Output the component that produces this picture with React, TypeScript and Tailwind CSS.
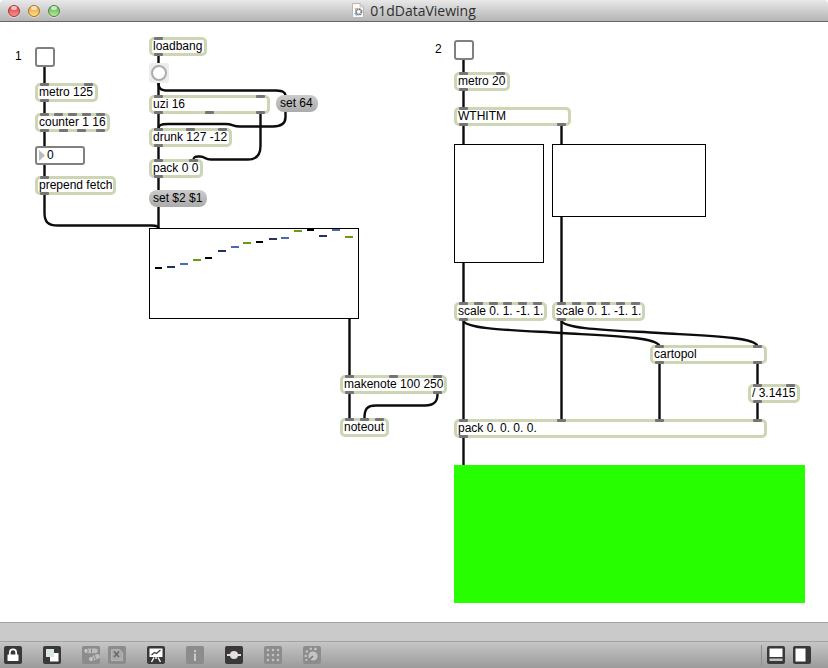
import type { ReactNode } from "react";

type Box = { text: string; place: string; inlets: number; outlets: number };

const boxes: Box[] = [
  { text: "metro 125", place: "left-[35px] top-[61px] w-[63px]", inlets: 2, outlets: 1 },
  { text: "counter 1 16", place: "left-[35px] top-[91px] w-[75px]", inlets: 5, outlets: 4 },
  { text: "prepend fetch", place: "left-[35px] top-[154px] w-[81px]", inlets: 1, outlets: 1 },
  { text: "loadbang", place: "left-[149px] top-[15px] w-[58px]", inlets: 1, outlets: 1 },
  { text: "uzi 16", place: "left-[149px] top-[73px] w-[121px]", inlets: 2, outlets: 3 },
  { text: "drunk 127 -12", place: "left-[149px] top-[106px] w-[83px]", inlets: 3, outlets: 1 },
  { text: "pack 0 0", place: "left-[149px] top-[137px] w-[54px]", inlets: 2, outlets: 1 },
  { text: "makenote 100 250", place: "left-[340px] top-[353px] w-[107px]", inlets: 3, outlets: 2 },
  { text: "noteout", place: "left-[340px] top-[396px] w-[49px]", inlets: 3, outlets: 0 },
  { text: "metro 20", place: "left-[454px] top-[50px] w-[56px]", inlets: 2, outlets: 1 },
  { text: "WTHITM", place: "left-[454px] top-[85px] w-[117px]", inlets: 1, outlets: 2 },
  { text: "scale 0. 1. -1. 1.", place: "left-[454px] top-[280px] w-[93px]", inlets: 6, outlets: 1 },
  { text: "scale 0. 1. -1. 1.", place: "left-[552px] top-[280px] w-[93px]", inlets: 6, outlets: 1 },
  { text: "cartopol", place: "left-[650px] top-[323px] w-[117px]", inlets: 2, outlets: 2 },
  { text: "/ 3.1415", place: "left-[748px] top-[362px] w-[52px]", inlets: 2, outlets: 1 },
  { text: "pack 0. 0. 0. 0.", place: "left-[454px] top-[397px] w-[313px]", inlets: 4, outlets: 1 },
];

// Patch cords, in window coordinates (the canvas starts below the 22px title bar).
const cords = [
  "M44.5 67V83M44.5 102V113M44.5 132V146M44.5 165V176",
  "M44.5 195V213C44.5 222 48 225.5 58 225.5H152C156 225.5 158 226 158.5 228",
  "M158.5 56V63M158.5 83V95M158.5 114V128M158.5 147V159M158.5 178V190M158.5 207V228",
  "M158.5 83C158.5 89 161 90.5 168 90.5H276C283 91 285.5 92 285.5 96",
  "M285.5 111V117C285.5 124 281 126.5 273 126.5H240C232 126.5 234 124 225 124H168C161 124 158.5 125 158.5 129",
  "M260.5 114V146C260.5 156 255 159.5 248 159.5H211C204 159.5 206 156.5 200 156.5H198C194 156.5 193.5 158 193.5 160",
  "M349.5 319V375M349.5 394V418",
  "M437.5 394C437.5 402 434 405.5 425 405.5H376C367 405.5 364.5 409 364.5 418",
  "M463.5 60V72M463.5 91V107M463.5 126V144M463.5 263V302M463.5 321V419M463.5 438V465",
  "M561.5 126V144M561.5 217V302M561.5 321V419",
  "M463.5 321C467 329 510 330 561.5 333S656 337 659.5 346",
  "M561.5 321C565 329 608 330 659.5 333S754 337 757.5 346",
  "M659.5 364V419M757.5 364V384M757.5 403V419",
];

const sliderTints = ["#000000", "#22335c", "#4969b4", "#6b9b12"];
const sliderSteps = [
  [5, 38], [17, 37], [30, 34], [43, 30], [55, 28], [68, 21], [81, 17], [93, 13],
  [106, 12], [119, 9], [131, 8], [144, 1], [157, 0], [169, 6], [182, 0], [195, 7],
];

function Ports({ count, edge }: { count: number; edge: string }) {
  return (
    <div className={`absolute left-[2px] right-[2px] flex justify-between ${edge}`}>
      {Array.from({ length: count }, (_, i) => (
        <span key={i} className="h-[3px] w-[9px] rounded-[1px] bg-[#757575]" />
      ))}
    </div>
  );
}

function ObjectBox({ text, place, inlets, outlets }: Box) {
  return (
    <div
      className={`absolute h-[19px] whitespace-nowrap rounded-[5px] border-[3px] border-[#cdd6b4] bg-white pl-px leading-3 ${place}`}
    >
      <Ports count={inlets} edge="-top-[3px]" />
      {text}
      <Ports count={outlets} edge="-bottom-[3px]" />
    </div>
  );
}

function Message({ text, place }: { text: string; place: string }) {
  return (
    <button
      type="button"
      className={`absolute h-[17px] whitespace-nowrap rounded-lg bg-linear-to-b from-[#cbcbcb] to-[#ababab] pl-1 text-left leading-[17px] ${place}`}
    >
      {text}
    </button>
  );
}

function Tool({ label, tone = "bg-[#393939]", children }: { label: string; tone?: string; children: ReactNode }) {
  return (
    <button type="button" aria-label={label} className={`size-[18px] rounded-[2px] ${tone}`}>
      <svg viewBox="0 0 18 18" className="size-[18px]">{children}</svg>
    </button>
  );
}

function Light({ tone }: { tone: string }) {
  return (
    <span className={`flex size-3 justify-center rounded-full border shadow-[0_1px_0_#ffffff80] ${tone}`}>
      <span className="h-1 w-[6px] rounded-full bg-white/65" />
    </span>
  );
}

const dim = "bg-[#8c8c8c]";

export default function App() {
  return (
    <div className="flex min-h-screen flex-col bg-white font-['Liberation_Sans',Arial,sans-serif] text-[12px] text-black">
      <header className="relative flex h-[22px] items-center justify-center gap-[6px] rounded-t-[4px] border-b border-[#666] bg-linear-to-b from-[#e9e9e9] to-[#b5b5b5]">
        <div className="absolute left-2 top-[5px] flex gap-2">
          <Light tone="border-[#9a3b3b] bg-linear-to-b from-[#d8323a] to-[#ff8f90]" />
          <Light tone="border-[#a8702b] bg-linear-to-b from-[#e79a35] to-[#ffdf80]" />
          <Light tone="border-[#4c8043] bg-linear-to-b from-[#55ad4b] to-[#b3ee94]" />
        </div>
        <svg viewBox="0 0 12 15" className="h-[15px] w-3">
          <path d="M.5 .5H8L11.5 4V14.5H.5Z" fill="#fafafa" stroke="#b8b8b8" />
          <path d="M8 .5V4H11.5Z" fill="#ddd" stroke="#b8b8b8" strokeWidth=".6" />
          <circle cx="6.8" cy="8.8" r="2.7" fill="none" stroke="#777" strokeWidth="1.8" strokeDasharray="1.6 .5" />
          <path d="M3 6.5L5 5.3" stroke="#eda552" strokeWidth="1.5" />
          <path d="M2.6 10L5 12.3" stroke="#6bbbe0" strokeWidth="1.6" />
          <circle cx="6.8" cy="8.8" r="1" fill="#fff" />
        </svg>
        <h1 className="font-['Open_Sans','Noto_Sans',sans-serif] text-[14px] leading-5 text-[#303030]">
          01dDataViewing
        </h1>
      </header>

      <main className="relative min-h-[600px] flex-1 overflow-hidden">
        <svg viewBox="0 22 828 600" className="absolute left-0 top-0 h-[600px] w-[828px]" fill="none" stroke="#0c0c0c" strokeWidth="2.4">
          {cords.map((d) => (
            <path key={d} d={d} />
          ))}
        </svg>

        <label htmlFor="run-1" className="absolute left-[15px] top-[28px] leading-3">1</label>
        <input id="run-1" type="checkbox" className="absolute left-[35px] top-[25px] size-5 appearance-none rounded-[3px] border-2 border-[#808080] bg-white" />
        <label htmlFor="run-2" className="absolute left-[435px] top-[21px] leading-3">2</label>
        <input id="run-2" type="checkbox" className="absolute left-[454px] top-[18px] size-5 appearance-none rounded-[3px] border-2 border-[#808080] bg-white" />

        {boxes.map((box) => (
          <ObjectBox key={box.place} {...box} />
        ))}

        <div className="absolute left-[35px] top-[124px] flex h-[19px] w-[50px] items-center rounded-[3px] border-2 border-[#808080] bg-white pl-[2px]">
          <svg viewBox="0 0 6 11" className="h-[11px] w-[6px] shrink-0">
            <path d="M0 0L6 5.5L0 11Z" fill="#bbb" />
          </svg>
          <input aria-label="Step" defaultValue="0" className="h-[15px] w-full min-w-0 bg-transparent pl-[2px] leading-[15px] outline-none" />
        </div>

        <button type="button" aria-label="Bang" className="absolute left-[149px] top-[41px] flex size-5 items-center justify-center rounded-[3px] bg-[#ededed]">
          <span className="size-4 rounded-full border-2 border-[#acacac] bg-white" />
        </button>
        <Message text="set 64" place="left-[276px] top-[73px] w-[42px]" />
        <Message text="set $2 $1" place="left-[149px] top-[168px] w-[58px]" />

        <div className="absolute left-[149px] top-[206px] h-[91px] w-[210px] border border-black bg-white">
          <svg viewBox="0 0 208 89" className="block h-full w-full" shapeRendering="crispEdges">
            {sliderSteps.map(([x, y], i) => (
              <rect key={x} x={x} y={y} width={i % 4 === 0 ? 7 : 8} height="2" fill={sliderTints[i % 4]} />
            ))}
          </svg>
        </div>
        <div className="absolute left-[454px] top-[122px] h-[119px] w-[90px] border border-black bg-white" />
        <div className="absolute left-[552px] top-[122px] h-[73px] w-[154px] border border-black bg-white" />
        <div className="absolute left-[454px] top-[443px] h-[138px] w-[351px] bg-[#27ff00]" />
      </main>

      <div className="h-[19px] border-t border-[#a3a3a3] bg-[#cacaca]" />
      <footer className="flex h-[27px] items-center gap-[21px] border-t border-[#a3a3a3] bg-linear-to-b from-[#c6c6c6] to-[#9b9b9b] pl-1 pr-[17px]">
        <Tool label="Lock">
          <path d="M5.8 9V6.5a3.2 3.2 0 0 1 6.4 0V9" fill="none" stroke="#fff" strokeWidth="1.7" />
          <rect x="3.5" y="8.5" width="11" height="6.5" rx=".5" fill="#fff" />
        </Tool>
        <Tool label="New view">
          <rect x="7" y="7" width="8.5" height="8.5" fill="#fff" />
          <rect x="3" y="3" width="8" height="8" fill="#dce6e6" />
        </Tool>
        <div className="flex gap-2">
          <Tool label="Find" tone={dim}>
            <path d="M4 4.8L13.5 4.8M9 13L15.5 10.5" stroke="#bdbdbd" strokeWidth="4.8" strokeLinecap="round" />
            <g fill="#c6c6c6" stroke="#858585" strokeWidth=".9">
              <ellipse cx="4" cy="4.9" rx="2.2" ry="2.6" />
              <ellipse cx="9" cy="13" rx="2.4" ry="2.6" />
              <path d="M9.5 2.5V7.2M12.5 9.2L14 13.5" />
            </g>
          </Tool>
          <Tool label="Close view" tone={dim}>
            <path d="M3.5 3.5H11.5L14.5 6.5V14.5H3.5Z" fill="#a9a9a9" stroke="#b4b4b4" />
            <path d="M6 5.5L11 11M11 5.5L6 11" stroke="#686868" strokeWidth="1.6" />
          </Tool>
        </div>
        <Tool label="Presentation">
          <rect x="2.5" y="2.5" width="13" height="8.5" fill="#fff" />
          <path d="M4.5 9L7.5 6.5L9.5 7.5L13.5 4" fill="none" stroke="#393939" strokeWidth="1.2" />
          <path d="M9 11V13M7 11.5L4.5 16M11 11.5L13.5 16" fill="none" stroke="#fff" strokeWidth="1.4" />
        </Tool>
        <Tool label="Info" tone={dim}>
          <path d="M8 4H10V6H8ZM8 7.5H10V15H8Z" fill="#c9c9c9" />
        </Tool>
        <Tool label="Signal">
          <path d="M2 9H16" stroke="#e6dede" strokeWidth="2" />
          <circle cx="9" cy="9" r="4" fill="#e6dede" />
        </Tool>
        <Tool label="Grid" tone={dim}>
          <path
            d="M4 4h0M9 4h0M14 4h0M4 9h0M9 9h0M14 9h0M4 14h0M9 14h0M14 14h0"
            stroke="#c2c2c2"
            strokeWidth="2.6"
            strokeLinecap="round"
          />
        </Tool>
        <Tool label="Settings" tone={dim}>
          <circle cx="10" cy="10" r="4.6" fill="#c4c4c4" />
          <path d="M10 10L6.5 13.5" stroke="#777" strokeWidth="1.6" />
          <g fill="#c4c4c4">
            <circle cx="2.7" cy="10" r="1.2" />
            <circle cx="3.8" cy="5.5" r="1.2" />
            <circle cx="7.8" cy="2.8" r="1.3" />
            <circle cx="12.5" cy="3" r="1.4" />
            <circle cx="3.4" cy="14" r="1.1" />
          </g>
        </Tool>
        <div className="ml-auto flex items-center gap-2">
          <span className="-mr-[3px] h-[21px] w-px bg-[#8e8e8e]" />
          <Tool label="Bottom panel">
            <rect x="2.5" y="2.5" width="13" height="8.5" fill="#fff" />
            <rect x="2.5" y="12.5" width="13" height="2.5" fill="#c4c4c4" />
          </Tool>
          <Tool label="Side panel">
            <rect x="2.5" y="2.5" width="10" height="13" fill="#fff" />
          </Tool>
        </div>
      </footer>
    </div>
  );
}
